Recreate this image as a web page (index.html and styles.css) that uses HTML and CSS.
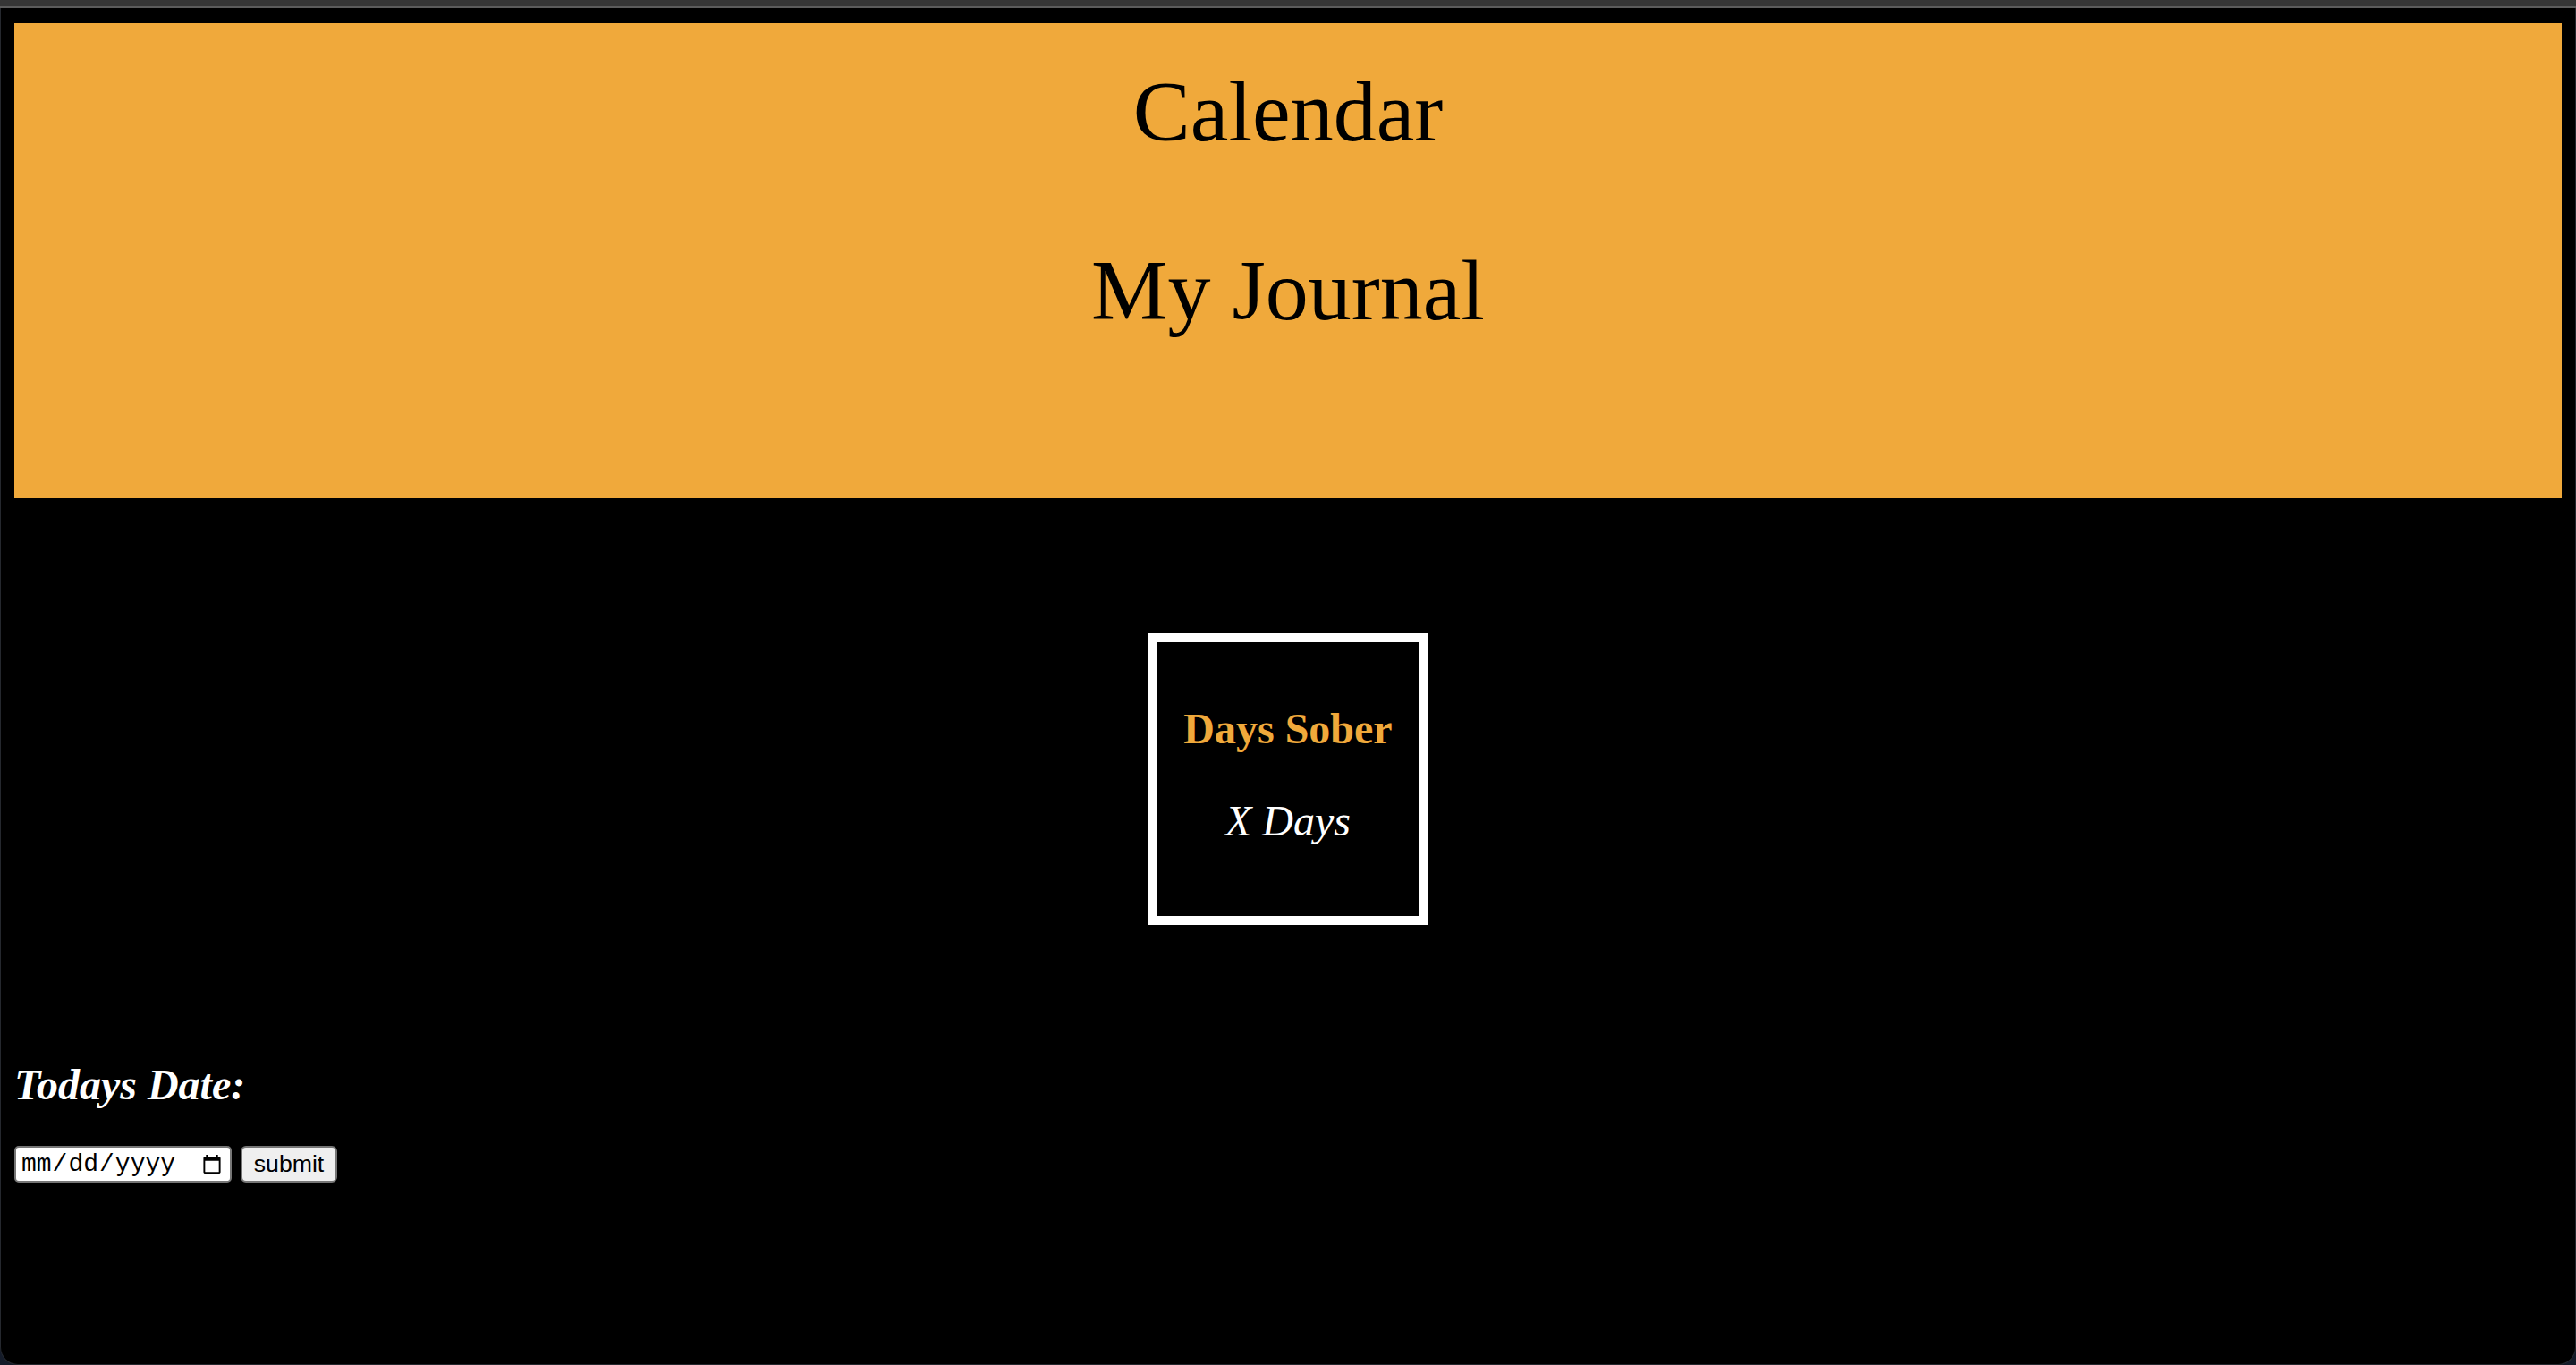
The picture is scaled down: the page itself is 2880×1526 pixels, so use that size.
FILE: index.html
```html
<!DOCTYPE html>
<html lang="en">
<head>
<meta charset="utf-8">
<title>My Journal</title>
<link rel="stylesheet" href="styles.css">
</head>
<body>
<div class="topbar"></div>
<div class="window">
  <header class="banner">
    <h1 class="banner-title">Calendar</h1>
    <h1 class="banner-title">My Journal</h1>
  </header>
  <section class="counter-wrap">
    <div class="counter">
      <h2 class="counter-label">Days Sober</h2>
      <p class="counter-value">X Days</p>
    </div>
  </section>
  <h2 class="date-label">Todays Date:</h2>
  <form class="date-form">
    <input type="date" class="date-input">
    <button type="submit" class="submit-btn">submit</button>
  </form>
</div>
</body>
</html>
```

FILE: styles.css
```css
html, body {
  margin: 0;
  padding: 0;
}

body {
  background: #141b29;
  font-family: "Liberation Serif", "Times New Roman", serif;
}

.topbar {
  height: 7px;
  background: #363636;
  border-bottom: 2px solid #5c5c5c;
}

.window {
  height: 1517px;
  box-sizing: border-box;
  background: #000;
  border: 1px solid #25282e;
  border-top: 0;
  border-radius: 0 0 20px 20px;
  padding: 17px 15px 0;
}

.banner {
  height: 531px;
  box-sizing: border-box;
  background: #f0a93b;
  padding-top: 44px;
  display: flex;
  flex-direction: column;
  align-items: center;
  gap: 90px;
}

.banner-title {
  margin: 0;
  font-size: 96px;
  line-height: 110px;
  font-weight: normal;
  color: #000;
}

.counter-wrap {
  display: flex;
  justify-content: center;
  padding-top: 151px;
}

.counter {
  width: 314px;
  height: 326px;
  box-sizing: border-box;
  border: 10px solid #fff;
  padding-top: 69px;
  display: flex;
  flex-direction: column;
  align-items: center;
  gap: 48px;
  text-align: center;
}

.counter-label {
  margin: 0;
  font-size: 48px;
  line-height: 55px;
  font-weight: bold;
  color: #f0a93b;
}

.counter-value {
  margin: 0;
  font-size: 48px;
  line-height: 55px;
  font-style: italic;
  color: #fff;
}

.date-label {
  margin: 151px 0 0;
  font-size: 48px;
  line-height: 55px;
  font-weight: bold;
  font-style: italic;
  color: #fff;
}

.date-form {
  display: flex;
  gap: 10px;
  margin-top: 41px;
}

.date-input {
  width: 243px;
  height: 41px;
  box-sizing: border-box;
  margin: 0;
  padding: 0 8px 0 5px;
  border: 2px solid #767676;
  border-radius: 5px;
  background: #fff;
  color: #000;
  font-family: "Liberation Mono", "DejaVu Sans Mono", monospace;
  font-size: 28px;
}

.date-input::-webkit-calendar-picker-indicator {
  width: 24px;
  height: 24px;
  padding: 0;
  margin: 0;
}

.submit-btn {
  width: 108px;
  height: 41px;
  box-sizing: border-box;
  margin: 0;
  padding: 0;
  border: 2px solid #767676;
  border-radius: 6px;
  background: #efefef;
  color: #000;
  font-family: "Liberation Sans", Arial, sans-serif;
  font-size: 26.67px;
}
```
